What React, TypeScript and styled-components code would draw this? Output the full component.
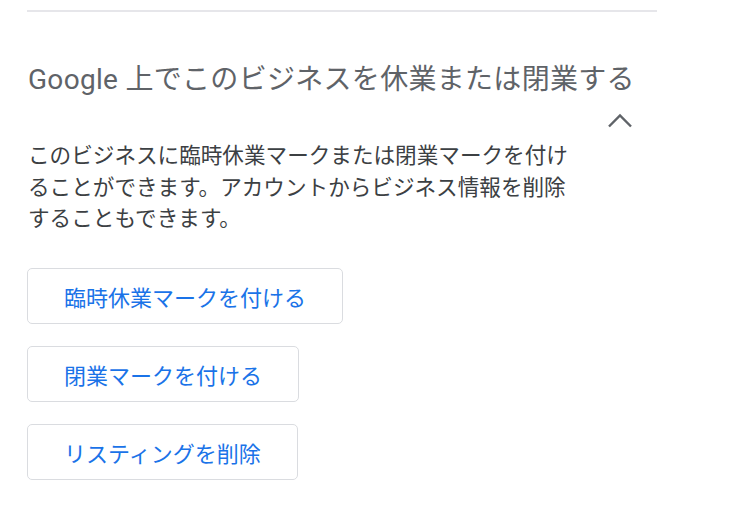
import { FC } from "react";
import styled, { createGlobalStyle } from "styled-components";

const GlobalStyle = createGlobalStyle`
  body {
    margin: 0;
    background: #ffffff;
    font-family: "Noto Sans CJK JP", "Noto Sans", sans-serif;
  }
`;

const ChevronUp: FC = () => (
  <svg width="26" height="24" viewBox="0 0 26 24" fill="none">
    <path d="M2 17.5 13 6.5l11 11" stroke="#5f6368" strokeWidth="2.4" />
  </svg>
);

export default function App() {
  return (
    <>
      <GlobalStyle />
      <SPanel>
        <SDivider />
        <STitle>Google 上でこのビジネスを休業または閉業する</STitle>
        <SToggleRow>
          <SToggle aria-label="折りたたむ">
            <ChevronUp />
          </SToggle>
        </SToggleRow>
        <SDescription>
          このビジネスに臨時休業マークまたは閉業マークを付けることができます。アカウントからビジネス情報を削除することもできます。
        </SDescription>
        <SActions>
          <SActionButton>臨時休業マークを付ける</SActionButton>
          <SActionButton>閉業マークを付ける</SActionButton>
          <SActionButton>リスティングを削除</SActionButton>
        </SActions>
      </SPanel>
    </>
  );
}

const SPanel = styled.div`
  width: 630px;
  padding: 10px 0 0 27px;
  box-sizing: content-box;
`;

const SDivider = styled.div`
  height: 2px;
  background: #e6e6ea;
`;

const STitle = styled.h2`
  margin: 50px 0 0 1px;
  font-family: Roboto, "Noto Sans CJK JP", sans-serif;
  font-size: 28px;
  font-weight: 400;
  line-height: 36px;
  letter-spacing: 0.3px;
  color: #5f6368;
  white-space: nowrap;
`;

const SToggleRow = styled.div`
  display: flex;
  justify-content: flex-end;
  padding-right: 24px;
  margin-top: 11px;
`;

const SToggle = styled.button`
  display: flex;
  align-items: center;
  justify-content: center;
  width: 26px;
  height: 24px;
  padding: 0;
  border: none;
  background: none;
  cursor: pointer;
`;

const SDescription = styled.p`
  margin: 5px 0 0 1px;
  max-width: 552px;
  font-size: 21.6px;
  line-height: 31.5px;
  color: #3c4043;
`;

const SActions = styled.div`
  display: flex;
  flex-direction: column;
  align-items: flex-start;
  gap: 22px;
  margin-top: 35px;
`;

const SActionButton = styled.button`
  height: 56px;
  padding: 0 36px;
  border: 1px solid #dadce0;
  border-radius: 5px;
  background: #ffffff;
  font-family: "Noto Sans CJK JP", sans-serif;
  font-size: 22px;
  color: #1a73e8;
  cursor: pointer;
`;
